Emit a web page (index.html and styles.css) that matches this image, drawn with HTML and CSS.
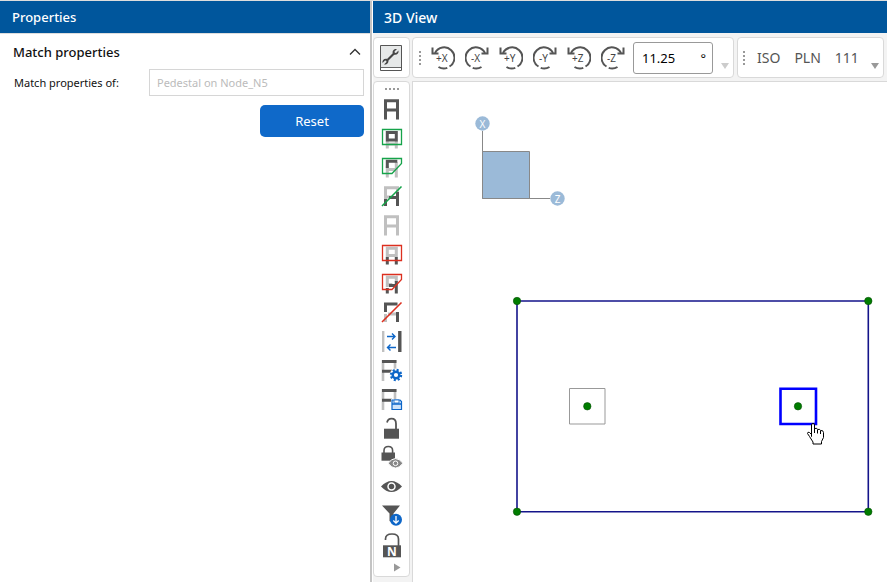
FILE: index.html
```html
<!DOCTYPE html>
<html lang="en">
<head>
<meta charset="utf-8">
<title>3D View</title>
<link rel="stylesheet" href="styles.css">
</head>
<body>
<div class="app">
  <aside class="panel">
    <h2 class="bar">Properties</h2>
    <div class="panel-body">
      <button class="section" type="button" aria-expanded="true">
        <span>Match properties</span>
        <svg width="12" height="8" viewBox="0 0 12 8"><path d="M1 6.500 6 1.500 11 6.500" fill="none" stroke="#333" stroke-width="1.300"/></svg>
      </button>
      <div class="field">
        <label for="source">Match properties of:</label>
        <input id="source" type="text" value="Pedestal on Node_N5" disabled>
      </div>
      <button class="reset" type="button">Reset</button>
    </div>
  </aside>
  <main class="view">
    <h2 class="bar">3D View</h2>
    <div class="work">
      <div class="card tool-card">
        <button class="icon" type="button" aria-label="Settings"><svg width="24" height="28" viewBox="0 0 24 28"><path d="M1.500 1.500h21v25h-21z" fill="#e6e8e8" stroke="#555"/><path d="M2 23.500h20" stroke="#666"/><path d="M2 24h20v2H2z" fill="#fff"/><path d="M8.500 16 15 9.500" stroke="#444" stroke-width="2.200"/><path d="M18 5l-2.500 2.500.3 1.200 1.200.3L19.500 6.500c.5 2.500-1.200 4.700-4.200 4.300l-1.600-1.600c-.6-2.500 1.300-4.600 4.300-4.200zM5 20.500 7.500 18l-.3-1.200-1.200-.3L3.500 19c-.5-2.500 1.200-4.700 4.200-4.300l1.600 1.600c.6 2.500-1.300 4.600-4.300 4.200z" fill="#444"/></svg></button>
      </div>
      <div class="toolbars">
        <div class="card rotations">
          <span class="grip"></span>
          <div class="rotate-group" id="rotate-group"></div>
          <div class="angle"><input type="text" value="11.25" aria-label="Angle"><span>°</span></div>
          <span class="more pale"></span>
        </div>
        <div class="card presets">
          <span class="grip"></span>
          <button type="button">ISO</button><button type="button">PLN</button><button type="button">111</button>
          <span class="more"></span>
        </div>
        <div class="card rest"></div>
      </div>
      <div class="card rail">
        <span class="grip flat"></span>
        <div class="rail-icons" id="rail-icons"></div>
        <svg class="rail-next" width="7" height="9" viewBox="0 0 7 9"><path d="M0 0.500 6.500 4.500 0 8.500z" fill="#999"/></svg>
      </div>
      <div class="canvas">
        <svg width="474" height="500" viewBox="413 82 474 500">
          <g fill="none" stroke="#888"><path d="M482.500 131v67.500H550"/><path d="M482.500 151.500h47v47h-47z" fill="#9bbad8"/></g>
          <g fill="#9bbad8"><circle cx="482.500" cy="123.500" r="7.200"/><circle cx="557.500" cy="198.500" r="7.200"/></g>
          <g class="axis"><text x="482.500" y="127.500">X</text><text x="557.500" y="202.500">Z</text></g>
          <path d="M517 301h351.300v210.700H517z" fill="none" stroke="#14148a" stroke-width="1.600"/>
          <path d="M569.500 388.500h35.500v35.500h-35.500z" fill="none" stroke="#999"/>
          <path d="M780.500 388.700h35.500v35.300h-35.500z" fill="none" stroke="#00f" stroke-width="2.600"/>
          <g fill="#007d00" stroke="#064f06" stroke-width=".6"><circle cx="517" cy="301" r="3.700"/><circle cx="868.300" cy="301" r="3.700"/><circle cx="517" cy="511.700" r="3.700"/><circle cx="868.300" cy="511.700" r="3.700"/><circle cx="587.300" cy="406.300" r="3.700"/><circle cx="798" cy="406.300" r="3.700"/></g>
          <path d="M811.500 436.500V425q0-1.500 1.500-1.500t1.500 1.500v5-1.500q3-.8 3 1 2.700-.7 3 1 2.800-.5 3 2v5l-2 4v2.500h-8.500V442l-3.500-5.500-2-3q0-2 2-1l2 2z" fill="#fff" stroke="#000"/>
          <path d="M814.500 429v4M817.500 430v3.500M820.500 431v3" stroke="#000"/>
        </svg>
      </div>
    </div>
  </main>
</div>
<script src="icons.js"></script>
</body>
</html>
```
FILE: styles.css
```css
* { box-sizing: border-box; }
body { margin: 0; font: 13px/20px "Noto Sans", "Open Sans", sans-serif; color: #111; background: #fff; }
button, input { font: inherit; }
button { padding: 0; border: 0; background: none; color: inherit; }
svg { display: block; }
.app { display: grid; grid-template-columns: 373px minmax(0, 1fr); min-height: 100vh; border-top: 1px solid #ddd; }
.panel { border-right: 2px solid #c4c4c4; margin-right: 1px; }
.bar { margin: 0; height: 32px; padding: 0 12px; font-size: 13px; line-height: 32px; font-weight: 500; color: #fff; background: #00569c; }
.view .bar { padding: 0 11px; font-size: 14px; line-height: 34px; }
.panel-body { display: flex; flex-direction: column; padding: 8px 6px 0 13px; border-top: 1px solid #ddd; }
.section { display: flex; justify-content: space-between; align-items: center; height: 20px; padding-right: 3px; font-weight: 500; }
.field { display: grid; grid-template-columns: 135px 1fr; align-items: center; margin-top: 7px; padding-left: 1px; font-size: 11px; }
.field input { width: 100%; height: 27px; padding: 0 7px; border: 1px solid #d6d6d6; border-radius: 0; background: #fff; color: #bbb; }
.reset { align-self: flex-end; width: 104px; height: 32px; margin-top: 9px; border-radius: 5px; background: #0f69c9; color: #fff; }
.view { display: flex; flex-direction: column; background: #f3f3f3; }
.work { flex: 1; display: grid; grid-template-columns: 37px minmax(0, 1fr); grid-template-rows: 41px 1fr; gap: 3px 2px; padding-top: 4px; }
.card { border: 1px solid #d9d9d9; border-radius: 4px; background: #fff; }
.tool-card { display: flex; align-items: center; justify-content: center; padding-right: 1px; }
.toolbars { display: flex; gap: 3px; overflow: hidden; }
.rotations, .presets { position: relative; display: flex; align-items: center; flex: none; }
.rotations { width: 322px; padding-left: 6px; }
.presets { width: 147px; padding-left: 5px; color: #555; font-size: 14px; gap: 14px; }
.presets .grip { margin-right: -2px; }
.rest { flex: 1 0 8px; }
.grip { width: 2px; height: 14px; background: repeating-linear-gradient(#999 0 2px, #fff 2px 4px); }
.flat { width: 14px; height: 2px; background: repeating-linear-gradient(90deg, #999 0 2px, #fff 2px 4px); }
.rotate-group { display: flex; gap: 10px; margin-left: 10px; }
.rotate-group text { font: 10px "Noto Sans", sans-serif; fill: #444; }
.angle { display: flex; align-items: center; width: 80px; height: 32px; margin-left: 8px; padding: 0 6px 0 8px; border: 1px solid #999; border-radius: 3px; }
.angle input { flex: 1; min-width: 0; padding: 0; border: 0; outline: 0; }
.more { position: absolute; right: 4px; bottom: 8px; border: 4px solid transparent; border-top: 6px solid #999; border-bottom: 0; }
.pale { border-top-color: #ccc; }
.rail { display: flex; flex-direction: column; align-items: center; height: 496px; padding-top: 6px; }
.rail-icons { margin-top: 5px; }
.rail-icons button { display: block; }
.rail-next { margin: 4px 0 0 11px; }
.rail-icons text { font: 700 12px "Noto Sans", sans-serif; fill: #fff; text-anchor: middle; }
.canvas { background: #fff; border-left: 1px solid #d9d9d9; border-top: 1px solid #d9d9d9; overflow: hidden; }
.axis text { font: 10px "Noto Sans", sans-serif; fill: #fff; text-anchor: middle; }
```
FILE: icons.js
```js
const D = '#555', G = '#c0c0c0', GR = '#16a34a', R = '#dc2f1f', B = '#0d66c8';
const line = (d, c, w = 3) => `<path d="${d}" fill="none" stroke="${c}" stroke-width="${w}"/>`;
const frame = c => line('M6.500 24.500V5.800h12v18.700M6.500 15h12', c);
const ladder = line('M4 4v21M16 4v10', G, 2.6) + line('M3 5.500h14.500M3 15.300h10', D);
const box = 'M3.500 5.500h19v15h-19z', cut = 'M3.500 5.500h19v5l-9.500 10h-9.500z';
const eye = 'M2 14.500Q12.500 3.500 23 14.500 12.500 25.500 2 14.500z';
const rail = [
  ['Show all', frame(D)],
  ['Show inside box', line('M8.300 17v7.500M17.300 17v7.500M8 20h9', G) + line('M8.300 8.500h9v7.500h-9z', D) + line(box, GR, 1.3)],
  ['Show inside polygon', line('M8.300 13v11.500M17.300 9v15.500M8.300 16.500h9', G) + line('M8.300 15V8.300h10', D) + line(cut, GR, 1.3)],
  ['Show by line', line('M6.500 17V5.800h12V12M6.500 15h6', G) + line('M6.500 24V17M10 15.500h8.500M18.500 10v14', D) + line('M3 24 22.500 4.500', GR, 1.6)],
  ['Show none', frame(G)],
  ['Hide inside box', line('M8.300 17V8.300h9V17M8.300 15.500h9', G) + line('M8.300 17v7.500M17.300 17v7.500', D) + line(box, R, 1.3)],
  ['Hide inside polygon', line('M8.300 18V8.300h9V13M8.300 15.500h5', G) + line('M8.300 19v5.500M17.300 12v12.500M10 16.500h8', D) + line(cut, R, 1.3)],
  ['Hide by line', line('M6.500 16v8M9 16h9', G) + line('M6.500 14V6h12M18.500 14v10', D) + line('M3 24 22.500 4.500', R, 1.6)],
  ['Swap visibility', line('M4.200 4v21', G, 2.4) + line('M20.800 4v21', D, 3.4) + line('M8 9.500h8M13 6.500l3 3-3 3M17 20.500H8.500M11.500 17.500l-3 3 3 3', B, 1.4)],
  ['View settings', ladder + `<circle cx="17" cy="19" r="6.500" fill="#fff"/><circle cx="17" cy="19" r="5" fill="none" stroke="${B}" stroke-width="2.400" stroke-dasharray="2 1.930"/><circle cx="17" cy="19" r="3.300" fill="none" stroke="${B}" stroke-width="2.400"/>`],
  ['Save view', ladder + `<path d="M12 14h11v11H12z" fill="#fff"/><path d="M13 15h8l1.500 1.500v8H13z" fill="#cfe3fa" stroke="${B}" stroke-width="1.200"/><path d="M13 19h9.500" stroke="${B}" stroke-width="1.500"/><path d="M15 15v3h5v-3z" fill="#fff" stroke="${B}" stroke-width=".8"/>`],
  ['Unlock', `<path d="M5 14.700h15v10H5z" fill="${D}"/>` + line('M8 8.500q1-3.800 4.500-3.800 4.500 0 4.500 5V15', D, 1.8)],
  ['Locked visibility', `<path d="M2.500 9.500H16v8.200H2.500z" fill="${D}"/>` + line('M5 10V7.500Q5 3.500 9.300 3.500t4.300 4V10', D, 1.6) + `<path d="M9 20.300q7.500-9.500 15 0-7.500 9.500-15 0z" fill="#888" stroke="#fff"/><circle cx="16.500" cy="20.300" r="2.300" fill="#888" stroke="#fff"/>`],
  ['Visibility', `<path d="${eye}" fill="${D}"/><circle cx="12.500" cy="14.500" r="3.500" fill="${D}" stroke="#fff" stroke-width="1.500"/>`],
  ['Filter', `<path d="M3 4.500h18l-6.500 8V22l-4-2v-7.500z" fill="${D}"/><circle cx="17" cy="18.800" r="6" fill="${B}"/>` + line('M17 15v7M14.300 19.500l2.700 2.700 2.700-2.700', '#fff', 1.3)],
  ['Node lock', `<path d="M4 15.300h18v12H4z" fill="${D}"/>` + line('M6.500 10V9q0-5 6.500-5t6.500 5v7', D, 1.7) + '<text x="13" y="25.500">N</text>']
];
document.getElementById('rail-icons').innerHTML = rail.map(([n, s]) =>
  `<button type="button" aria-label="${n}"><svg width="25" height="29" viewBox="0 0 25 29">${s}</svg></button>`).join('');
const arc = line('M4 7A10.300 10.300 0 1 1 18.500 20.500M16.300 21.900A10.300 10.300 0 0 1 7.500 21', '#555', 2) + line('M1.500 1.500v6h6', '#555', 2);
document.getElementById('rotate-group').innerHTML = ['+X', '-X', '+Y', '-Y', '+Z', '-Z'].map(t =>
  `<button type="button" aria-label="Rotate ${t}"><svg width="24" height="24" viewBox="0 0 24 24"><g${t[0] === '-' ? ' transform="matrix(-1 0 0 1 24 0)"' : ''}>${arc}</g><text x="${t[0] === '+' ? 5 : 6}" y="16">${t}</text></svg></button>`).join('');
```
